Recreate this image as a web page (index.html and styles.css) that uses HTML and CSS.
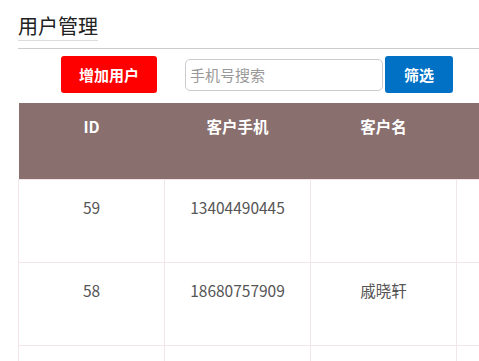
FILE: index.html
```html
<!DOCTYPE html>
<html lang="zh-CN">
<head>
    <meta charset="UTF-8">
    <meta name="viewport" content="width=device-width, initial-scale=1.0">
    <title>用户管理</title>
    <link rel="stylesheet" href="styles.css">
</head>
<body>
    <div class="page-head">
        <span class="page-title">用户管理</span>
    </div>

    <div class="toolbar">
        <button class="btn btn-add">增加用户</button>
        <input type="text" class="search" placeholder="手机号搜索">
        <button class="btn btn-filter">筛选</button>
    </div>

    <table class="user-table">
        <colgroup>
            <col><col><col><col>
        </colgroup>
        <thead>
            <tr>
                <th>ID</th>
                <th>客户手机</th>
                <th>客户名</th>
                <th></th>
            </tr>
        </thead>
        <tbody>
            <tr>
                <td>59</td>
                <td>13404490445</td>
                <td></td>
                <td></td>
            </tr>
            <tr>
                <td>58</td>
                <td>18680757909</td>
                <td>戚晓轩</td>
                <td></td>
            </tr>
            <tr>
                <td></td>
                <td></td>
                <td></td>
                <td></td>
            </tr>
        </tbody>
    </table>
</body>
</html>
```

FILE: styles.css
```css
html, body {
    overflow: hidden;
}
body {
    font-family: "Noto Sans CJK SC", "Noto Sans", sans-serif;
    margin: 0;
    padding: 0 0 0 18px;
    background-color: #fff;
    color: #333;
}
.page-head {
    padding-top: 14px;
    padding-bottom: 7px;
    border-bottom: 1px solid #ccc;
}
.page-title {
    display: inline-block;
    font-size: 20px;
    line-height: 24px;
    padding-bottom: 2px;
    border-bottom: 1px solid #ddd;
    color: #222;
}
.toolbar {
    display: flex;
    align-items: center;
    margin-top: 7px;
    padding-left: 43px;
}
.btn {
    height: 37px;
    border: none;
    border-radius: 3px;
    color: #fff;
    font-family: inherit;
    font-size: 15px;
    font-weight: bold;
    cursor: pointer;
}
.btn-add {
    width: 96px;
    background-color: #ff0000;
}
.search {
    width: 198px;
    height: 32px;
    box-sizing: border-box;
    margin-left: 28px;
    padding: 0 4px;
    border: 1px solid #ccc;
    border-radius: 5px;
    font-family: inherit;
    font-size: 15px;
    color: #555;
}
.search::placeholder {
    color: #999;
}
.btn-filter {
    width: 68px;
    margin-left: 2px;
    background-color: #0071c5;
}
.user-table {
    margin-top: 10px;
    width: 584px;
    table-layout: fixed;
    border-collapse: collapse;
    font-size: 15.5px;
}
.user-table col {
    width: 146px;
}
.user-table th {
    background-color: #896f6e;
    color: #fff;
    font-size: 15.5px;
    font-weight: bold;
    line-height: 20px;
    padding: 13px 0 43px;
    border: none;
}
.user-table td {
    text-align: center;
    color: #555;
    line-height: 20px;
    height: 20px;
    padding: 17px 0 45px;
    border: 1px solid #f2e6ea;
}
```
